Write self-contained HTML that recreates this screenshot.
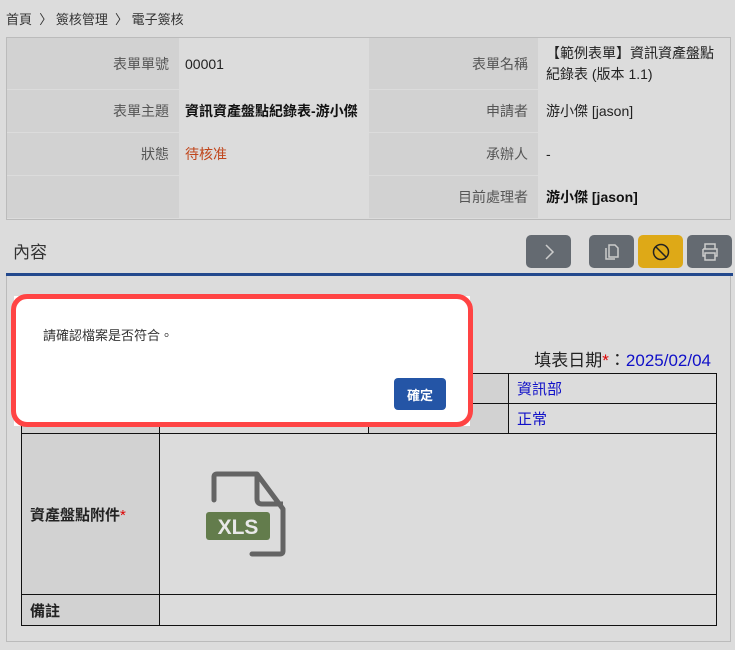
<!DOCTYPE html>
<html><head><meta charset="utf-8"><style>
*{margin:0;padding:0;box-sizing:border-box}
body{width:735px;height:650px;background:#dcdcdc;font-family:"Liberation Sans","Noto Sans CJK TC",sans-serif;position:relative;overflow:hidden;color:#222}
.a{position:absolute}
.bc{left:6px;top:9px;font-size:13px;color:#333}
.lab{background:#d2d2d2}
.val{background:#dcdcdc}
.c{position:absolute;font-size:14px;display:flex;align-items:center}
.r{justify-content:flex-end;padding-right:10px;color:#555}
.l{padding-left:6px}
.btn{position:absolute;top:235px;width:45px;height:33px;border-radius:5px;background:#646a71;display:flex;align-items:center;justify-content:center}
td{border:1px solid #111;font-size:15px}
</style></head><body>
<div class="a bc">首頁 &nbsp;〉 簽核管理 &nbsp;〉 電子簽核</div>
<div class="a" style="left:6px;top:37px;width:725px;height:183px;border:1px solid #bbb;background:#dcdcdc"></div>
<div class="c lab r" style="left:7px;top:38px;width:172px;height:51px">表單單號</div>
<div class="c val l" style="left:179px;top:38px;width:190px;height:51px">00001</div>
<div class="c lab r" style="left:369px;top:38px;width:169px;height:51px">表單名稱</div>
<div class="c val l" style="left:538px;top:38px;width:192px;height:51px;line-height:21px;padding-left:8px;padding-right:14px">【範例表單】資訊資產盤點紀錄表 (版本 1.1)</div>
<div class="c lab r" style="left:7px;top:90px;width:172px;height:42px">表單主題</div>
<div class="c val l" style="left:179px;top:90px;width:190px;height:42px;font-weight:bold;color:#111">資訊資產盤點紀錄表-游小傑</div>
<div class="c lab r" style="left:369px;top:90px;width:169px;height:42px">申請者</div>
<div class="c val l" style="left:538px;top:90px;width:192px;height:42px;padding-left:8px">游小傑 [jason]</div>
<div class="c lab r" style="left:7px;top:133px;width:172px;height:42px">狀態</div>
<div class="c val l" style="left:179px;top:133px;width:190px;height:42px;color:#c0461c">待核准</div>
<div class="c lab r" style="left:369px;top:133px;width:169px;height:42px">承辦人</div>
<div class="c val l" style="left:538px;top:133px;width:192px;height:42px;padding-left:8px">-</div>
<div class="c lab r" style="left:7px;top:176px;width:172px;height:42px"></div>
<div class="c lab r" style="left:369px;top:176px;width:169px;height:42px">目前處理者</div>
<div class="c val l" style="left:538px;top:176px;width:192px;height:42px;padding-left:8px;font-weight:bold;color:#111">游小傑 [jason]</div>

<div class="a" style="left:13px;top:238px;font-size:17px;color:#333">內容</div>
<div class="btn" style="left:526px"><svg width="14" height="18" viewBox="0 0 14 18"><path d="M4 2l7 7-7 7" fill="none" stroke="#ccc" stroke-width="1.5"/></svg></div>
<div class="btn" style="left:589px"><svg width="18" height="20" viewBox="0 0 18 20"><path d="M6 3h6l3 3v9H6z M3 6v11h9" fill="none" stroke="#ccc" stroke-width="1.5"/></svg></div>
<div class="btn" style="left:638px;background:#dea917"><svg width="20" height="20" viewBox="0 0 20 20"><circle cx="10" cy="10" r="7.5" fill="none" stroke="#222" stroke-width="1.5"/><path d="M5 5l10 10" stroke="#222" stroke-width="1.5"/></svg></div>
<div class="btn" style="left:687px"><svg width="20" height="20" viewBox="0 0 20 20"><path d="M5 7V2h10v5 M3 7h14v7h-2 M5 14H3V7 M5 11h10v7H5z" fill="none" stroke="#ccc" stroke-width="1.5"/></svg></div>
<div class="a" style="left:6px;top:273px;width:727px;height:3px;background:#23498d"></div>
<div class="a" style="left:6px;top:276px;width:725px;height:366px;border:1px solid #bbb;border-top:none"></div>

<div class="a" style="right:24px;top:346px;font-size:17px;color:#222">填表日期<span style="color:#d00">*</span>：<span style="color:#1010c8">2025/02/04</span></div>
<table class="a" style="left:21px;top:373px;width:696px;border-collapse:collapse">
<tr style="height:30px"><td style="width:138px;background:#d2d2d2"></td><td style="width:209px"></td><td style="width:140px;background:#d2d2d2"></td><td style="color:#1010c8;padding-left:8px">資訊部</td></tr>
<tr style="height:30px"><td style="background:#d2d2d2"></td><td></td><td style="background:#d2d2d2"></td><td style="color:#1010c8;padding-left:8px">正常</td></tr>
<tr style="height:161px"><td style="background:#d2d2d2;padding-left:8px;font-weight:bold">資產盤點附件<span style="color:#d00;font-weight:normal">*</span></td><td colspan="3" style="position:relative">
<svg class="a" style="left:46px;top:37px" width="82" height="88" viewBox="0 0 82 88"><path d="M8 29V6Q8 3 11 3H51L77 38V80Q77 83 74 83H46" fill="none" stroke="#646464" stroke-width="5" stroke-linejoin="round" stroke-linecap="round"/><path d="M51 3V28Q51 33 56 33H77" fill="none" stroke="#646464" stroke-width="5"/><rect x="0" y="41" width="64" height="28" rx="3" fill="#637c4c"/><text x="32" y="63" text-anchor="middle" font-family="Liberation Sans" font-weight="bold" font-size="21" fill="#e8e8e8">XLS</text></svg></td></tr>
<tr style="height:31px"><td style="background:#d2d2d2;padding-left:8px;font-weight:bold">備註</td><td colspan="3"></td></tr>
</table>

<div class="a" style="left:14px;top:296px;width:456px;height:130px;background:#fff"></div>
<div class="a" style="left:11px;top:294px;width:462px;height:133px;border:5px solid #f44;border-radius:16px;background:#fff"></div>
<div class="a" style="left:43px;top:325px;font-size:13px;color:#333">請確認檔案是否符合。</div>
<div class="a" style="left:394px;top:378px;width:52px;height:32px;background:#2455a6;border-radius:4px;color:#fff;font-size:13px;font-weight:bold;display:flex;align-items:center;justify-content:center">確定</div>
</body></html>
